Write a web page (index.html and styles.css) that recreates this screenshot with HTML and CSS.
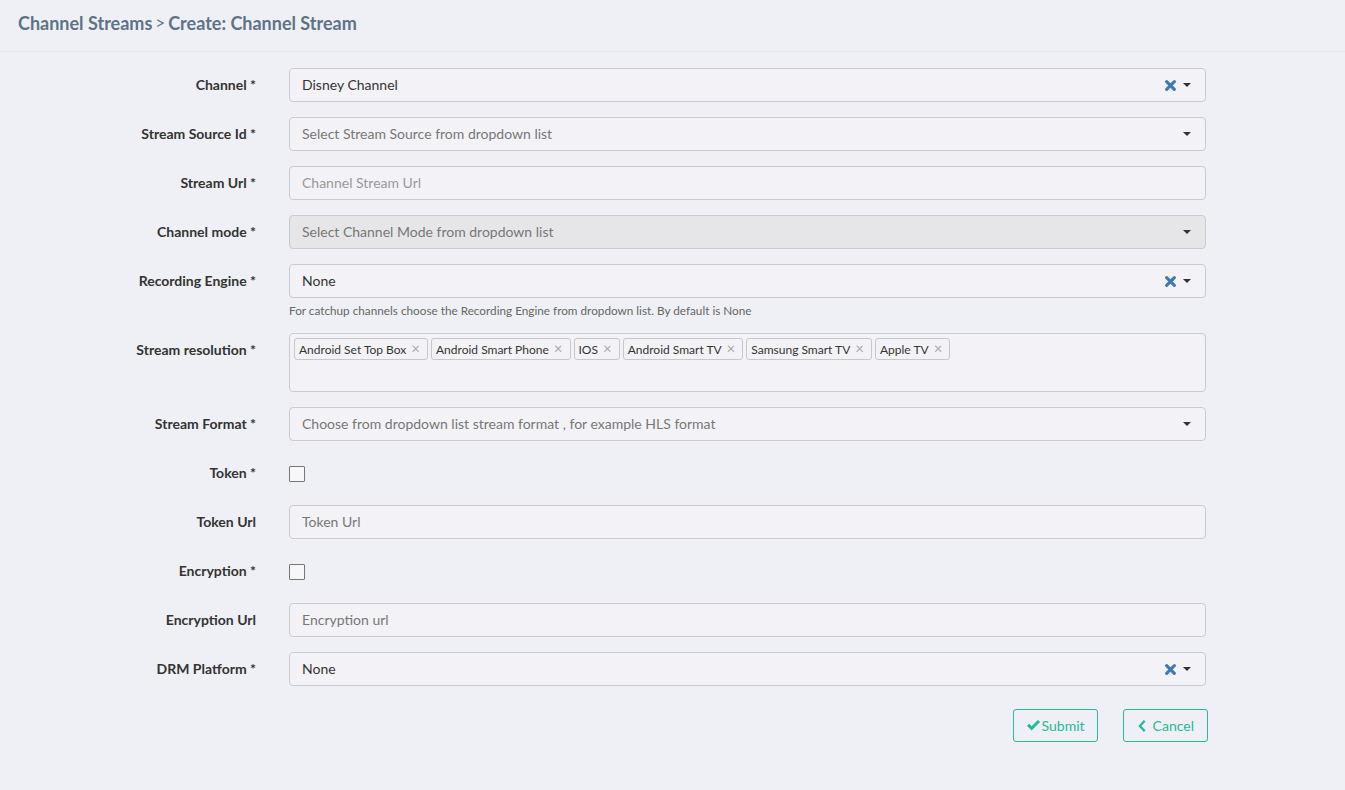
FILE: index.html
```html
<!DOCTYPE html>
<html>
<head>
  <meta charset="UTF-8">
  <title>Create: Channel Stream</title>
  <link rel="stylesheet" href="styles.css">
</head>
<body>
  <div class="page-title">
    <h3>Channel Streams<span class="sep">&gt;</span>Create: Channel Stream</h3>
  </div>

  <form class="stream-form">
    <label class="ctl-label">Channel *</label>
    <div class="select">
      <span class="value">Disney Channel</span>
      <span class="clear"><svg viewBox="0 0 10 10" width="11" height="11"><path d="M1.5 1.5 L8.5 8.5 M8.5 1.5 L1.5 8.5" stroke="#3d7ab5" stroke-width="2.8" stroke-linecap="round"/></svg></span>
      <span class="caret"></span>
    </div>

    <label class="ctl-label">Stream Source Id *</label>
    <div class="select">
      <span class="value placeholder">Select Stream Source from dropdown list</span>
      <span class="caret"></span>
    </div>

    <label class="ctl-label">Stream Url *</label>
    <div class="input"><span class="placeholder light">Channel Stream Url</span></div>

    <label class="ctl-label">Channel mode *</label>
    <div class="select disabled">
      <span class="value placeholder">Select Channel Mode from dropdown list</span>
      <span class="caret"></span>
    </div>

    <label class="ctl-label">Recording Engine *</label>
    <div class="field">
      <div class="select">
        <span class="value">None</span>
        <span class="clear"><svg viewBox="0 0 10 10" width="11" height="11"><path d="M1.5 1.5 L8.5 8.5 M8.5 1.5 L1.5 8.5" stroke="#3d7ab5" stroke-width="2.8" stroke-linecap="round"/></svg></span>
        <span class="caret"></span>
      </div>
      <p class="help">For catchup channels choose the Recording Engine from dropdown list. By default is None</p>
    </div>

    <label class="ctl-label">Stream resolution *</label>
    <div class="tags">
      <span class="tag">Android Set Top Box<i>&times;</i></span>
      <span class="tag">Android Smart Phone<i>&times;</i></span>
      <span class="tag">IOS<i>&times;</i></span>
      <span class="tag">Android Smart TV<i>&times;</i></span>
      <span class="tag">Samsung Smart TV<i>&times;</i></span>
      <span class="tag">Apple TV<i>&times;</i></span>
    </div>

    <label class="ctl-label">Stream Format *</label>
    <div class="select">
      <span class="value placeholder">Choose from dropdown list stream format , for example HLS format</span>
      <span class="caret"></span>
    </div>

    <label class="ctl-label">Token *</label>
    <div class="check-wrap"><span class="checkbox"></span></div>

    <label class="ctl-label">Token Url</label>
    <div class="input"><span class="placeholder">Token Url</span></div>

    <label class="ctl-label">Encryption *</label>
    <div class="check-wrap"><span class="checkbox"></span></div>

    <label class="ctl-label">Encryption Url</label>
    <div class="input"><span class="placeholder">Encryption url</span></div>

    <label class="ctl-label">DRM Platform *</label>
    <div class="select">
      <span class="value">None</span>
      <span class="clear"><svg viewBox="0 0 10 10" width="11" height="11"><path d="M1.5 1.5 L8.5 8.5 M8.5 1.5 L1.5 8.5" stroke="#3d7ab5" stroke-width="2.8" stroke-linecap="round"/></svg></span>
      <span class="caret"></span>
    </div>

    <div class="actions">
      <button type="button" class="btn">
        <svg viewBox="0 0 16 16" width="15" height="15"><path d="M1 8.3 L6 13.3 L15 4.2 L12.7 2 L6 8.8 L3.3 6 Z" fill="#26b99a"/></svg>Submit
      </button>
      <button type="button" class="btn cancel">
        <svg viewBox="0 0 10 16" width="9" height="14"><path d="M7.5 2 L2 8 L7.5 14" stroke="#26b99a" stroke-width="2.6" fill="none"/></svg>Cancel
      </button>
    </div>
  </form>
</body>
</html>
```

FILE: styles.css
```css
/* page */
body {
  margin: 0;
  background: #eff0f5;
  font-family: Lato, "Open Sans", sans-serif;
  font-size: 14px;
  color: #333;
}

.page-title {
  height: 51px;
  border-bottom: 1px solid #e6e7ec;
  padding-left: 18px;
}
.page-title h3 {
  margin: 0;
  padding-top: 11px;
  font-size: 18px;
  font-weight: 700;
  color: #5d7387;
  line-height: 24px;
}
.page-title .sep { font-weight: 400; font-size: 17px; margin: 0 3px; position: relative; top: -1px; }

/* form grid: labels right, controls left */
.stream-form {
  display: grid;
  grid-template-columns: 256px 917px;
  column-gap: 33px;
  row-gap: 15px;
  padding-top: 16px;
}

.ctl-label {
  text-align: right;
  font-weight: 700;
  padding-top: 7px;
  line-height: 20px;
  color: #333;
}

.input, .select {
  height: 34px;
  box-sizing: border-box;
  border: 1px solid #cbcbcf;
  border-radius: 4px;
  background: #f3f3f7;
  padding: 6px 12px;
  line-height: 20px;
  display: flex;
  align-items: center;
}
.select .value { flex: 1; white-space: nowrap; }
.placeholder { color: #777; }
.placeholder.light { color: #999; }
.select.disabled { background: #e6e6e8; }

.clear { display: flex; margin-right: 7px; }
.caret {
  width: 0; height: 0;
  border-left: 4px solid transparent;
  border-right: 4px solid transparent;
  border-top: 4px solid #333;
  margin-right: 2px;
}

.help {
  margin: 5px 0 0;
  font-size: 11.75px;
  line-height: 15px;
  color: #666;
}

/* stream resolution tags */
.tags {
  height: 59px;
  box-sizing: border-box;
  border: 1px solid #cbcbcf;
  border-radius: 4px;
  background: #f3f3f7;
  padding: 4px 4px;
  display: flex;
  align-items: flex-start;
  gap: 3px;
}
.tag {
  border: 1px solid #c8c8cc;
  border-radius: 3px;
  padding: 0 7px 0 4px;
  font-size: 12px;
  line-height: 18px;
  color: #333;
  white-space: nowrap;
}
.tag i { font-style: normal; color: #aaa; font-size: 15px; margin-left: 5px; }

/* checkboxes */
.check-wrap { height: 34px; display: flex; align-items: center; }
.checkbox {
  width: 14px; height: 14px;
  border: 1px solid #777;
  border-radius: 1px;
  background: #f7f7f9;
  margin-top: 1px;
}

/* buttons */
.actions {
  grid-column: 2;
  display: flex;
  justify-content: flex-end;
  gap: 25px;
  margin-top: 8px;
  margin-right: -2px;
}
.btn {
  height: 33px;
  box-sizing: border-box;
  border: 1px solid #26b99a;
  border-radius: 3px;
  background: transparent;
  color: #26b99a;
  font-family: Lato, sans-serif;
  font-size: 14px;
  padding: 0 12px;
  display: flex;
  align-items: center;
  gap: 1px;
}
.btn.cancel { gap: 6px; padding: 0 13px 0 14px; }
```
